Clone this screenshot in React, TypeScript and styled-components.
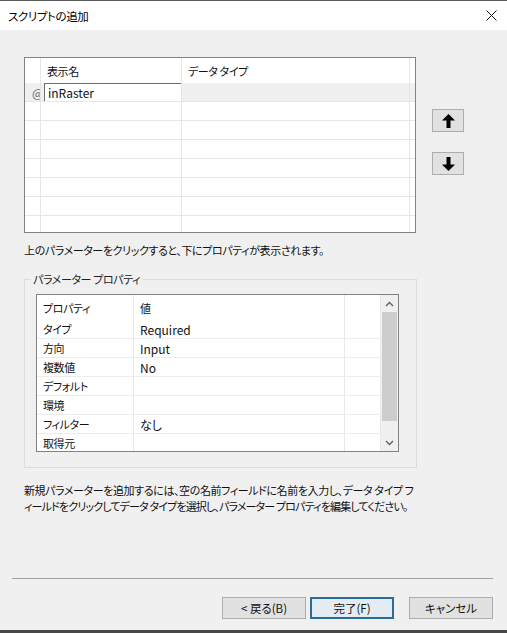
import React from 'react';
import styled, { createGlobalStyle } from 'styled-components';

const GlobalStyle = createGlobalStyle`
  body {
    margin: 0;
    background: #f0f0f0;
  }
`;

const Window = styled.div`
  width: 507px;
  height: 633px;
  box-sizing: border-box;
  display: flex;
  flex-direction: column;
  background: #f0f0f0;
  border-top: 1px solid #5b5b5b;
  border-bottom: 3px solid #474747;
  font-family: 'Noto Sans CJK JP', 'Noto Sans', sans-serif;
  font-size: 11px;
  letter-spacing: -0.4px;
  font-feature-settings: 'palt';
  color: #111;
`;

const TitleBar = styled.div`
  height: 29px;
  background: #fff;
  display: flex;
  align-items: center;
  justify-content: space-between;
  padding: 0 10px 0 8px;
`;

const TitleText = styled.div`
  font-size: 11.5px;
  color: #000;
`;

const Body = styled.div`
  flex: 1;
  display: flex;
  flex-direction: column;
  padding: 0 14px 0 12px;
`;

const TopRow = styled.div`
  display: flex;
  margin: 27px 0 0 12px;
`;

const ParamGrid = styled.div`
  width: 392px;
  height: 176px;
  box-sizing: border-box;
  border: 1px solid #828282;
  background: #fff;
  display: grid;
  grid-template-columns: 16px 141px 228px 1fr;
  grid-template-rows: 25px;
  grid-auto-rows: 19px;
  align-content: start;
  overflow: hidden;
`;

const GridCell = styled.div<{ $header?: boolean; $selected?: boolean }>`
  box-sizing: border-box;
  border-right: 1px solid #e6e6e6;
  border-bottom: ${(p) => (p.$header ? 'none' : '1px solid #e6e6e6')};
  background: ${(p) => (p.$selected ? '#f0f0f0' : '#fff')};
  padding-left: ${(p) => (p.$header ? '6px' : '0')};
  display: flex;
  align-items: center;
  overflow: hidden;
  white-space: nowrap;
`;

const RowMark = styled.span`
  padding-left: 7px;
  color: #666;
  font-size: 12px;
`;

const EditBox = styled.div`
  box-sizing: border-box;
  height: 19px;
  margin: 0 -1px 0 3px;
  flex: 1;
  border: 1px solid #6e6e6e;
  background: #fff;
  padding-left: 3px;
  display: flex;
  align-items: center;
  font-size: 12px;
  letter-spacing: 0;
`;

const ButtonColumn = styled.div`
  display: flex;
  flex-direction: column;
  gap: 20px;
  margin-left: 16px;
  padding-top: 52px;
`;

const ArrowButton = styled.button`
  width: 32px;
  height: 23px;
  box-sizing: border-box;
  border: 1px solid #adadad;
  background: #e1e1e1;
  padding: 0;
  display: flex;
  align-items: center;
  justify-content: center;
`;

const Hint = styled.div`
  margin: 9px 0 0 12px;
  line-height: 16px;
`;

const GroupBox = styled.fieldset`
  margin: 13px 0 0 12px;
  width: 393px;
  box-sizing: border-box;
  border: 1px solid #dcdcdc;
  padding: 7px 0 15px 11px;
`;

const GroupLegend = styled.legend`
  margin-left: -5px;
  padding: 0 2px;
  line-height: 16px;
  color: #222;
`;

const PropList = styled.div`
  width: 363px;
  height: 158px;
  box-sizing: border-box;
  border: 1px solid #828282;
  background: #fff;
  display: flex;
`;

const PropGrid = styled.div`
  flex: 1;
  display: grid;
  grid-template-columns: 97px 211px 1fr;
  grid-template-rows: 25px;
  grid-auto-rows: 19px;
  align-content: start;
  overflow: hidden;
`;

const PropCell = styled.div<{ $header?: boolean }>`
  box-sizing: border-box;
  border-right: 1px solid #e8e8e8;
  border-bottom: ${(p) => (p.$header ? 'none' : '1px solid #ececec')};
  padding-left: 6px;
  display: flex;
  align-items: center;
  white-space: nowrap;
`;

const PropValue = styled.span`
  font-size: 12px;
  letter-spacing: 0;
`;

const ScrollBar = styled.div`
  width: 17px;
  background: #f0f0f0;
  display: flex;
  flex-direction: column;
`;

const ScrollArrow = styled.div`
  height: 17px;
  display: flex;
  align-items: center;
  justify-content: center;
`;

const ScrollThumb = styled.div`
  height: 109px;
  margin: 0 1px;
  background: #cdcdcd;
`;

const ScrollTrack = styled.div`
  flex: 1;
`;

const Note = styled.div`
  margin: 14px 0 0 12px;
  line-height: 16px;
  white-space: nowrap;
`;

const NoteLine = styled.div<{ $tight?: boolean }>`
  letter-spacing: ${(p) => (p.$tight ? '-0.85px' : '-0.4px')};
`;

const Spacer = styled.div`
  flex: 1;
`;

const Separator = styled.div`
  height: 1px;
  background: #a0a0a0;
`;

const Footer = styled.div`
  display: flex;
  justify-content: flex-end;
  margin: 18px 0 11px;
`;

const DialogButton = styled.button<{ $primary?: boolean; $gap: number }>`
  width: 84px;
  height: 22px;
  box-sizing: border-box;
  margin-left: ${(p) => p.$gap}px;
  border: ${(p) => (p.$primary ? '2px solid #2a6d98' : '1px solid #adadad')};
  background: ${(p) => (p.$primary ? '#e3ecf3' : '#e1e1e1')};
  font-family: inherit;
  font-size: 11.5px;
  font-feature-settings: 'palt';
  color: #111;
  padding: 0;
`;

const CloseIcon = () => (
  <svg width="11" height="11" viewBox="0 0 11 11">
    <path d="M0.5 0.5 L10.5 10.5 M10.5 0.5 L0.5 10.5" stroke="#111" strokeWidth="1" />
  </svg>
);

const BigArrow = ({ down }: { down?: boolean }) => (
  <svg width="13" height="14" viewBox="0 0 13 14" style={{ transform: down ? 'rotate(180deg)' : undefined }}>
    <polygon points="6.5,0 13,6.5 8.5,6.5 8.5,14 4.5,14 4.5,6.5 0,6.5" fill="#000" />
  </svg>
);

const Chevron = ({ down }: { down?: boolean }) => (
  <svg width="9" height="6" viewBox="0 0 9 6">
    <path d={down ? 'M1 1 L4.5 4.5 L8 1' : 'M1 5 L4.5 1.5 L8 5'} stroke="#606060" strokeWidth="1.4" fill="none" />
  </svg>
);

const properties: [string, string][] = [
  ['タイプ', 'Required'],
  ['方向', 'Input'],
  ['複数値', 'No'],
  ['デフォルト', ''],
  ['環境', ''],
  ['フィルター', 'なし'],
  ['取得元', ''],
];

const App = () => {
  const emptyRows = Array.from({ length: 7 });

  return (
    <>
      <GlobalStyle />
      <Window>
        <TitleBar>
          <TitleText>スクリプトの追加</TitleText>
          <CloseIcon />
        </TitleBar>
        <Body>
          <TopRow>
            <ParamGrid>
              <GridCell $header />
              <GridCell $header>表示名</GridCell>
              <GridCell $header>データ タイプ</GridCell>
              <GridCell $header />

              <GridCell $selected>
                <RowMark>@</RowMark>
              </GridCell>
              <GridCell $selected>
                <EditBox>inRaster</EditBox>
              </GridCell>
              <GridCell $selected />
              <GridCell $selected />

              {emptyRows.map((_, i) => (
                <React.Fragment key={i}>
                  <GridCell />
                  <GridCell />
                  <GridCell />
                  <GridCell />
                </React.Fragment>
              ))}
            </ParamGrid>
            <ButtonColumn>
              <ArrowButton>
                <BigArrow />
              </ArrowButton>
              <ArrowButton>
                <BigArrow down />
              </ArrowButton>
            </ButtonColumn>
          </TopRow>

          <Hint>上のパラメーターをクリックすると、下にプロパティが表示されます。</Hint>

          <GroupBox>
            <GroupLegend>パラメーター プロパティ</GroupLegend>
            <PropList>
              <PropGrid>
                <PropCell $header>プロパティ</PropCell>
                <PropCell $header>値</PropCell>
                <PropCell $header />
                {properties.map(([name, value]) => (
                  <React.Fragment key={name}>
                    <PropCell>{name}</PropCell>
                    <PropCell>
                      <PropValue>{value}</PropValue>
                    </PropCell>
                    <PropCell />
                  </React.Fragment>
                ))}
              </PropGrid>
              <ScrollBar>
                <ScrollArrow>
                  <Chevron />
                </ScrollArrow>
                <ScrollThumb />
                <ScrollTrack />
                <ScrollArrow>
                  <Chevron down />
                </ScrollArrow>
              </ScrollBar>
            </PropList>
          </GroupBox>

          <Note>
            <NoteLine>新規パラメーターを追加するには、空の名前フィールドに名前を入力し、データ タイプ フ</NoteLine>
            <NoteLine $tight>ィールドをクリックしてデータ タイプを選択し、パラメーター プロパティを編集してください。</NoteLine>
          </Note>

          <Spacer />
          <Separator />
          <Footer>
            <DialogButton $gap={0}>&lt; 戻る(B)</DialogButton>
            <DialogButton $gap={4} $primary>
              完了(F)
            </DialogButton>
            <DialogButton $gap={15}>キャンセル</DialogButton>
          </Footer>
        </Body>
      </Window>
    </>
  );
};

export default App;
